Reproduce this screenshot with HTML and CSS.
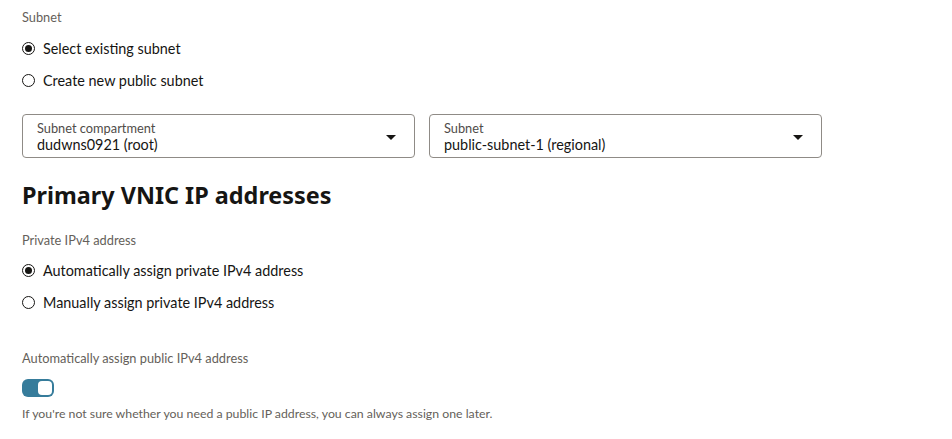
FILE: index.html
```html
<!DOCTYPE html>
<html>
<head>
<meta charset="utf-8">
<link rel="stylesheet" href="styles.css">
</head>
<body>
<div class="page">
  <div class="field-label">Subnet</div>
  <div class="radio-group">
    <label class="radio-row"><span class="radio checked"></span><span>Select existing subnet</span></label>
    <label class="radio-row"><span class="radio"></span><span>Create new public subnet</span></label>
  </div>
  <div class="selects">
    <div class="select">
      <div class="select-text">
        <div class="select-label">Subnet compartment</div>
        <div class="select-value">dudwns0921 (root)</div>
      </div>
      <span class="caret"></span>
    </div>
    <div class="select">
      <div class="select-text">
        <div class="select-label">Subnet</div>
        <div class="select-value">public-subnet-1 (regional)</div>
      </div>
      <span class="caret"></span>
    </div>
  </div>
  <h2 class="heading">Primary VNIC IP addresses</h2>
  <div class="field-label">Private IPv4 address</div>
  <div class="radio-group">
    <label class="radio-row"><span class="radio checked"></span><span>Automatically assign private IPv4 address</span></label>
    <label class="radio-row"><span class="radio"></span><span>Manually assign private IPv4 address</span></label>
  </div>
  <div class="field-label public">Automatically assign public IPv4 address</div>
  <div class="toggle"><span class="knob"></span></div>
  <div class="helper">If you're not sure whether you need a public IP address, you can always assign one later.</div>
</div>
</body>
</html>
```
FILE: styles.css
```css
html, body {
  margin: 0;
  padding: 0;
  background: #ffffff;
}
body {
  font-family: "Lato", "Noto Sans", sans-serif;
  color: #161513;
}
.page {
  padding: 9px 0 0 22px;
}
.field-label {
  font-size: 12.8px;
  line-height: 16px;
  color: #655f5a;
}
.radio-group {
  margin-top: 7px;
  display: flex;
  flex-direction: column;
}
.radio-row {
  display: flex;
  align-items: center;
  height: 32px;
  font-size: 14.4px;
  gap: 8px;
}
.radio {
  width: 11px;
  height: 11px;
  border: 1.5px solid #161513;
  border-radius: 50%;
  display: flex;
  align-items: center;
  justify-content: center;
  box-sizing: content-box;
}
.radio.checked::after {
  content: "";
  width: 7px;
  height: 7px;
  border-radius: 50%;
  background: #161513;
}
.selects {
  margin-top: 18px;
  display: flex;
  gap: 14px;
}
.select {
  width: 393px;
  height: 44px;
  box-sizing: border-box;
  border: 1px solid #8f8b86;
  border-radius: 4px;
  display: flex;
  align-items: flex-start;
  justify-content: space-between;
  padding: 5px 18px 0 14px;
}
.select-label {
  font-size: 12.8px;
  line-height: 16px;
  color: #4f4c49;
}
.select-value {
  font-size: 14.4px;
  line-height: 18px;
}
.caret {
  margin-top: 15px;
  width: 0;
  height: 0;
  border-left: 5px solid transparent;
  border-right: 5px solid transparent;
  border-top: 5px solid #161513;
}
.heading {
  margin: 21px 0 0 0;
  font-family: "Noto Sans", "Lato", sans-serif;
  font-size: 23.4px;
  line-height: 32px;
  font-weight: 700;
}
.heading + .field-label {
  margin-top: 21px;
}
.heading + .field-label + .radio-group {
  margin-top: 6px;
}
.field-label.public {
  margin-top: 32px;
}
.toggle {
  margin-top: 13px;
  width: 32px;
  height: 18px;
  border-radius: 6px;
  background: #367c9b;
  display: flex;
  align-items: center;
  justify-content: flex-end;
  padding-right: 2px;
  box-sizing: border-box;
}
.knob {
  width: 14px;
  height: 14px;
  border-radius: 4px;
  background: #ffffff;
}
.helper {
  margin-top: 9px;
  font-size: 12.3px;
  line-height: 16px;
  color: #655f5a;
}
```
